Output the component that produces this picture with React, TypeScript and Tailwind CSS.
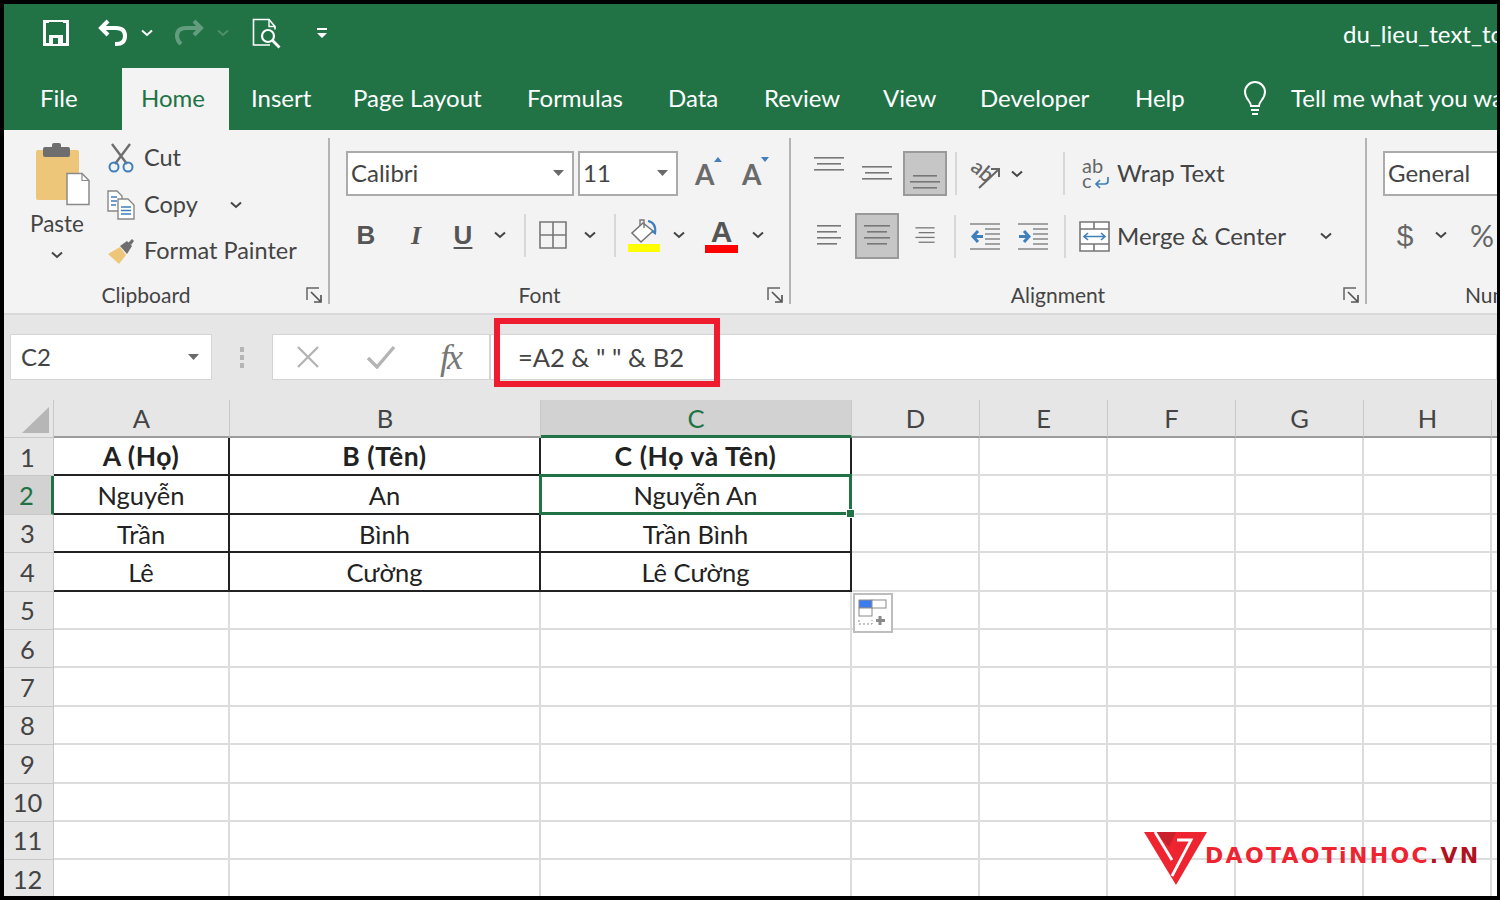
const tabs = [
  { label: 'File', cls: 'w-[101px] text-white' },
  { label: 'Home', cls: 'w-[110px] text-[#217346]' },
  { label: 'Insert', cls: 'w-[102px] text-white' },
  { label: 'Page Layout', cls: 'w-[174px] text-white' },
  { label: 'Formulas', cls: 'w-[141px] text-white' },
  { label: 'Data', cls: 'w-[96px] text-white' },
  { label: 'Review', cls: 'w-[119px] text-white' },
  { label: 'View', cls: 'w-[97px] text-white' },
  { label: 'Developer', cls: 'w-[155px] text-white' },
  { label: 'Help', cls: 'w-[107px] text-white' },
];

const columns = ['A', 'B', 'C', 'D', 'E', 'F', 'G', 'H', ''];

const tableData = [
  ['A (Họ)', 'B (Tên)', 'C (Họ và Tên)'],
  ['Nguyễn', 'An', 'Nguyễn An'],
  ['Trần', 'Bình', 'Trần Bình'],
  ['Lê', 'Cường', 'Lê Cường'],
];

const rowNumbers = [1, 2, 3, 4, 5, 6, 7, 8, 9, 10, 11, 12];

function Chevron({ className = 'text-[#444]' }: { className?: string }) {
  return (
    <svg width="12" height="8" viewBox="0 0 12 8" className={`shrink-0 ${className}`}>
      <path d="M1 1.5l5 4.5 5-4.5" fill="none" stroke="currentColor" strokeWidth="2" />
    </svg>
  );
}

function DropArrow() {
  return (
    <svg width="11" height="6" viewBox="0 0 11 6">
      <path d="M0 0h11L5.5 6z" fill="#6a6a6a" />
    </svg>
  );
}

function Launcher() {
  return (
    <svg width="17" height="17" viewBox="0 0 17 17" className="absolute right-[5px] bottom-0">
      <path d="M1 13V1h12" fill="none" stroke="#666" strokeWidth="1.5" />
      <path d="M5 5l9 9M15 8v7H8" fill="none" stroke="#555" strokeWidth="1.7" />
    </svg>
  );
}

function Lines({ widths, align }: { widths: number[]; align: 'left' | 'center' | 'right' }) {
  return (
    <svg width="30" height={widths.length * 6} viewBox={`0 0 30 ${widths.length * 6}`}>
      {widths.map((w, i) => (
        <rect
          key={i}
          x={align === 'left' ? 3 : align === 'right' ? 27 - w : 15 - w / 2}
          y={i * 6 + 1}
          width={w}
          height="1.6"
          fill="#777"
        />
      ))}
    </svg>
  );
}

function IndentIcon({ out }: { out?: boolean }) {
  return (
    <svg width="30" height="27" viewBox="0 0 30 27" className="shrink-0">
      <path d="M0 1h30M0 26h30" stroke="#888" strokeWidth="1.6" />
      <path d="M15 6h15M15 11h15M15 16h15M15 21h15" stroke="#888" strokeWidth="1.6" />
      {out ? (
        <path d="M13 13.500H4M8 8l-5 5.500 5 5.500" fill="none" stroke="#3f7fbb" strokeWidth="3" />
      ) : (
        <path d="M1 13.500h9M6 8l5 5.500-5 5.500" fill="none" stroke="#3f7fbb" strokeWidth="3" />
      )}
    </svg>
  );
}

function TitleBar() {
  return (
    <div className="h-[64px] flex items-center bg-[#217346] text-white pl-[39px] pb-[6px] overflow-hidden">
      <svg width="26" height="26" viewBox="0 0 26 26" className="mr-[29px] shrink-0">
        <path d="M1.500 1.500h23v23h-23z" fill="none" stroke="#fff" strokeWidth="3" />
        <path d="M6 2h14v8H6z" fill="#217346" />
        <path d="M6 15h14v9H6z" fill="#fff" />
        <path d="M10 18h5v6h-5z" fill="#217346" />
      </svg>
      <svg width="30" height="28" viewBox="0 0 30 28" className="mr-[13px] shrink-0">
        <path d="M10 2L3 9l7 7" fill="none" stroke="#fff" strokeWidth="4" />
        <path d="M4 9h14c6 0 9 3 9 8s-3 8-9 8h-1" fill="none" stroke="#fff" strokeWidth="4" />
      </svg>
      <Chevron className="text-white mr-[21px]" />
      <svg width="30" height="28" viewBox="0 0 30 28" className="mr-[13px] opacity-30 shrink-0">
        <path d="M20 2l7 7-7 7" fill="none" stroke="#fff" strokeWidth="4" />
        <path d="M26 9H12c-6 0-9 3-9 8s2 6 4 8" fill="none" stroke="#fff" strokeWidth="4" />
      </svg>
      <Chevron className="text-white opacity-20 mr-[23px]" />
      <svg width="31" height="31" viewBox="0 0 31 31" className="mr-[34px] shrink-0">
        <path d="M18 27H1.500V1.500H17l6 7v3" fill="none" stroke="#fff" strokeWidth="1.600" />
        <path d="M17 1.500v7h6" fill="none" stroke="#fff" strokeWidth="1.400" />
        <circle cx="16" cy="18" r="6" fill="none" stroke="#fff" strokeWidth="2.200" />
        <path d="M20.500 22.500l7 7" stroke="#fff" strokeWidth="2.800" />
      </svg>
      <svg width="10" height="12" viewBox="0 0 10 12" className="shrink-0">
        <path d="M0 1h10v2H0zM0 6h10l-5 5z" fill="#fff" />
      </svg>
      <span className="ml-auto mt-[2px] mr-[-60px] text-[24px] whitespace-nowrap w-[214px]">du_lieu_text_to_columns</span>
    </div>
  );
}

function TabBar() {
  return (
    <div className="h-[62px] flex bg-[#217346] text-[24px] overflow-hidden">
      <div className="w-[17px] shrink-0" />
      {tabs.map((t) => (
        <div
          key={t.label}
          className={`${t.cls} flex items-center pl-[19px] pb-[2px] shrink-0 ${t.label === 'Home' ? 'bg-[#f3f3f3] !w-[107px] mr-[3px]' : ''}`}
        >
          {t.label}
        </div>
      ))}
      <div className="flex items-center text-white shrink-0 whitespace-nowrap pb-[2px]">
        <svg width="26" height="36" viewBox="0 0 26 36" className="ml-[19px] mr-[23px]">
          <path
            d="M9 26c0-5-6-7-6-14a10 10 0 0 1 20 0c0 7-6 9-6 14z"
            fill="none"
            stroke="#fff"
            strokeWidth="2"
          />
          <path d="M9 30h8M10 34h6" stroke="#fff" strokeWidth="2" />
        </svg>
        Tell me what you want to do
      </div>
    </div>
  );
}

function Group({ width, label, launcher, children }: { width: string; label: string; launcher?: boolean; children: React.ReactNode }) {
  return (
    <div className={`${width} shrink-0 border-r-2 border-[#b4b4b4] flex flex-col relative`}>
      <div className="flex-1 min-h-0">{children}</div>
      <div className="h-[24px] pt-[5px] pr-[40px] leading-[20px] text-[21px] text-[#444] text-center">{label}</div>
      {launcher && <Launcher />}
    </div>
  );
}

function ClipboardGroup() {
  return (
    <div className="flex h-full pl-[18px]">
      <div className="w-[70px] flex flex-col items-center">
        <svg width="56" height="63" viewBox="0 0 56 63" className="mt-[5px] ml-[12px]">
          <rect x="1" y="7" width="43" height="50" rx="2" fill="#eec679" />
          <rect x="8" y="4" width="27" height="10" rx="2" fill="#6e6e6e" />
          <rect x="17" y="0" width="9" height="8" rx="2" fill="#6e6e6e" />
          <path d="M32 30.500h15l7 7v24H32z" fill="#fff" stroke="#8a8a8a" strokeWidth="1.500" />
          <path d="M47 30.500v7h7" fill="none" stroke="#8a8a8a" strokeWidth="1.200" />
        </svg>
        <div className="text-[22.5px] leading-[26px] text-[#444] mt-[5px]">Paste</div>
        <div className="mt-[14px]">
          <Chevron />
        </div>
      </div>
      <div className="flex flex-col ml-[15px] text-[23.5px] text-[#444]">
        <div className="h-[46px] flex items-center mt-[-3px]">
          <svg width="28" height="30" viewBox="0 0 28 30" className="mr-[9px]">
            <path d="M5 1l15 20M23 1L8 21" stroke="#6e6e6e" strokeWidth="2.400" />
            <circle cx="7" cy="24" r="4.500" fill="none" stroke="#3f7fbb" strokeWidth="2" />
            <circle cx="21" cy="24" r="4.500" fill="none" stroke="#3f7fbb" strokeWidth="2" />
          </svg>
          Cut
        </div>
        <div className="h-[47px] flex items-center">
          <svg width="28" height="30" viewBox="0 0 28 30" className="mr-[9px]">
            <path d="M1 1h9l5 5v15H1z" fill="#fff" stroke="#888" strokeWidth="1.400" />
            <path d="M11 9h10l6 6v14H11z" fill="#fff" stroke="#888" strokeWidth="1.400" />
            <path d="M4 7h6M4 11h6M4 15h5M14 17h10M14 20.500h10M14 24h10" stroke="#3f7fbb" strokeWidth="1.400" />
          </svg>
          Copy
          <Chevron className="text-[#444] ml-[32px]" />
        </div>
        <div className="h-[46px] flex items-center">
          <svg width="28" height="27" viewBox="0 0 28 27" className="mr-[9px]">
            <path d="M1 16l12-7 6 8-7 9z" fill="#eec679" />
            <path d="M13 8l7-5 5 5-5 8z" fill="#6e6e6e" />
            <path d="M21 5l4-4 2 2-3 4z" fill="#6e6e6e" />
          </svg>
          Format Painter
        </div>
      </div>
    </div>
  );
}

function FontGroup() {
  return (
    <div className="pl-[16px] pt-[13px] text-[#444]">
      <div className="flex items-center h-[45px]">
        <div className="w-[228px] h-[45px] bg-white border-2 border-[#ababab] flex items-center justify-between pl-[3px] pr-[8px] pb-[2px] text-[24px]">
          Calibri
          <DropArrow />
        </div>
        <div className="w-[100px] h-[45px] ml-[4px] bg-white border-2 border-[#ababab] flex items-center justify-between pl-[3px] pr-[8px] pb-[2px] text-[24px]">
          11
          <DropArrow />
        </div>
        <div className="ml-[17px] relative w-[25px] text-[28px] leading-none text-[#6a6a6a] font-bold">
          A
          <span className="absolute right-[-2px] top-[-3px] w-0 h-0 border-x-[4px] border-x-transparent border-b-[5px] border-b-[#3f7fbb]" />
        </div>
        <div className="ml-[22px] relative w-[25px] text-[28px] leading-none text-[#6a6a6a] font-bold">
          A
          <span className="absolute right-[-2px] top-[-3px] w-0 h-0 border-x-[4px] border-x-transparent border-t-[5px] border-t-[#3f7fbb]" />
        </div>
      </div>
      <div className="flex items-center h-[44px] mt-[17px]">
        <div className="w-[40px] shrink-0 text-center text-[26px] font-bold text-[#555] font-['Liberation_Sans',sans-serif]">B</div>
        <div className="w-[60px] shrink-0 text-center text-[26px] font-bold italic text-[#555] font-['Liberation_Serif',serif]">I</div>
        <div className="w-[34px] shrink-0 text-center text-[26px] font-bold text-[#555] underline underline-offset-[3px] font-['Liberation_Sans',sans-serif]">U</div>
        <div className="w-[40px] shrink-0 flex justify-center">
          <Chevron />
        </div>
        <div className="ml-[4px] w-[2px] h-[43px] bg-[#d8d8d8] shrink-0" />
        <svg width="28" height="28" viewBox="0 0 28 28" className="ml-[13px] shrink-0">
          <path d="M1 1h26v26H1zM14 1v26M1 14h26" fill="none" stroke="#777" strokeWidth="1.600" />
        </svg>
        <Chevron className="text-[#444] ml-[17px]" />
        <div className="ml-[18px] w-[2px] h-[43px] bg-[#d8d8d8] shrink-0" />
        <div className="ml-[12px] w-[32px] flex flex-col items-center shrink-0">
          <svg width="28" height="26" viewBox="0 0 28 26">
            <path d="M13 5L2 15l9 9 12-11z" fill="#fff" stroke="#777" strokeWidth="1.600" />
            <path d="M10 8V2h4v8" fill="none" stroke="#777" strokeWidth="1.400" />
            <path d="M18 3c5 1 8 5 7 12l-3-2" fill="none" stroke="#3f7fbb" strokeWidth="2.200" />
          </svg>
          <div className="w-[32px] h-[8px] bg-[#ffff00]" />
        </div>
        <Chevron className="text-[#444] ml-[13px]" />
        <div className="ml-[20px] w-[33px] flex flex-col items-center shrink-0">
          <span className="text-[30px] leading-[27px] font-bold text-[#555] font-['Liberation_Sans',sans-serif]">A</span>
          <div className="w-[33px] h-[8px] bg-[#ff0000]" />
        </div>
        <Chevron className="text-[#444] ml-[14px]" />
      </div>
    </div>
  );
}

function AlignmentGroup() {
  return (
    <div className="pl-[13px] pt-[13px] text-[#444] text-[24px]">
      <div className="flex items-center h-[45px]">
        <div className="w-[50px] flex justify-center mb-[18px] shrink-0">
          <Lines widths={[30, 24, 30]} align="center" />
        </div>
        <div className="w-[46px] flex justify-center shrink-0">
          <Lines widths={[30, 24, 30]} align="center" />
        </div>
        <div className="ml-[3px] w-[44px] h-[45px] bg-[#c6c6c6] border-2 border-[#9a9a9a] flex items-end justify-center pb-[2px] shrink-0">
          <Lines widths={[24, 30, 24]} align="center" />
        </div>
        <div className="ml-[8px] w-[2px] h-[43px] bg-[#d8d8d8] shrink-0" />
        <svg width="32" height="32" viewBox="0 0 32 32" className="ml-[12px] shrink-0">
          <text x="1" y="18" fontSize="21" fontWeight="600" fill="#666" transform="rotate(40 10 14)" fontFamily="Lato">ab</text>
          <path d="M10 30L29 12M22 11h8v8" fill="none" stroke="#666" strokeWidth="2" />
        </svg>
        <Chevron className="text-[#444] ml-[10px]" />
        <div className="ml-[40px] w-[2px] h-[43px] bg-[#d8d8d8] shrink-0" />
        <div className="ml-[17px] w-[27px] h-[34px] relative leading-[15px] text-[20px] text-[#666] shrink-0 pt-[1px]">
          <div>ab</div>
          <div>c</div>
          <svg width="16" height="12" viewBox="0 0 16 12" className="absolute right-[-1px] bottom-[2px]">
            <path d="M14 0v4c0 2-1 3-3 3H3M6 3L2 7l4 4" fill="none" stroke="#3f7fbb" strokeWidth="1.700" />
          </svg>
        </div>
        <span className="ml-[8px] pb-[2px] whitespace-nowrap">Wrap Text</span>
      </div>
      <div className="flex items-center h-[46px] mt-[17px]">
        <div className="w-[50px] flex justify-center shrink-0">
          <Lines widths={[24, 20, 24, 20]} align="left" />
        </div>
        <div className="ml-[1px] w-[44px] h-[46px] bg-[#c6c6c6] border-2 border-[#9a9a9a] flex items-center justify-center shrink-0">
          <Lines widths={[26, 20, 26, 20]} align="center" />
        </div>
        <div className="ml-[14px] w-[24px] flex justify-center shrink-0">
          <Lines widths={[24, 20, 24, 20]} align="right" />
        </div>
        <div className="ml-[17px] w-[2px] h-[43px] bg-[#d8d8d8] shrink-0" />
        <div className="ml-[14px]">
          <IndentIcon out />
        </div>
        <div className="ml-[18px]">
          <IndentIcon />
        </div>
        <div className="ml-[16px] w-[2px] h-[43px] bg-[#d8d8d8] shrink-0" />
        <svg width="31" height="31" viewBox="0 0 31 31" className="ml-[13px] shrink-0">
          <path d="M1 1h29v29H1zM1 8h29M1 23h29M15 1v7M15 23v7" fill="#fff" stroke="#777" strokeWidth="1.600" />
          <path d="M5 15.500h21M9 12l-4 3.500 4 3.500M22 12l4 3.500-4 3.500" fill="none" stroke="#3f7fbb" strokeWidth="1.600" />
        </svg>
        <span className="ml-[7px] w-[203px] whitespace-nowrap">Merge &amp; Center</span>
        <Chevron />
      </div>
    </div>
  );
}

function NumberGroup() {
  return (
    <div className="pl-[16px] pt-[13px] text-[#444] flex flex-col h-full w-[130px]">
      <div className="w-[200px] h-[45px] bg-white border-2 border-[#ababab] flex items-center pl-[3px] pb-[2px] text-[24px] shrink-0">General</div>
      <div className="flex items-center h-[44px] mt-[17px] text-[#666] text-[30px] whitespace-nowrap shrink-0">
        <span className="w-[44px] text-center font-['Liberation_Sans',sans-serif]">$</span>
        <Chevron className="text-[#444] ml-[8px]" />
        <span className="ml-[23px] text-[30px]">%</span>
      </div>
      <div className="mt-auto h-[24px] pt-[5px] leading-[20px] text-[21px] pl-[82px] whitespace-nowrap">Number</div>
    </div>
  );
}

function Ribbon() {
  return (
    <div className="h-[183px] bg-[#f3f3f3] flex pt-[8px] pb-[9px] overflow-hidden">
      <Group width="w-[326px]" label="Clipboard" launcher>
        <ClipboardGroup />
      </Group>
      <Group width="w-[461px]" label="Font" launcher>
        <FontGroup />
      </Group>
      <Group width="w-[576px]" label="Alignment" launcher>
        <AlignmentGroup />
      </Group>
      <NumberGroup />
    </div>
  );
}

function FormulaBar() {
  return (
    <div className="h-[87px] bg-[#e6e6e6] border-t-2 border-[#d9d9d9] pt-[19px] flex text-[#444]">
      <div className="ml-[6px] w-[202px] h-[46px] bg-white border border-[#d4d4d4] flex items-center justify-between pl-[10px] pr-[12px] text-[24px]">
        C2
        <DropArrow />
      </div>
      <div className="w-[60px] h-[46px] flex flex-col items-center justify-center gap-[3px]">
        <span className="w-[4px] h-[5px] bg-[#b5b5b5]" />
        <span className="w-[4px] h-[5px] bg-[#b5b5b5]" />
        <span className="w-[4px] h-[5px] bg-[#b5b5b5]" />
      </div>
      <div className="w-[218px] h-[46px] bg-white border border-[#d4d4d4] flex items-center">
        <svg width="24" height="24" viewBox="0 0 24 24" className="ml-[23px] shrink-0">
          <path d="M2 2l20 20M22 2L2 22" stroke="#b4b4b4" strokeWidth="2.400" />
        </svg>
        <svg width="30" height="24" viewBox="0 0 30 24" className="ml-[46px] shrink-0">
          <path d="M2 13l9 9L28 2" fill="none" stroke="#b4b4b4" strokeWidth="3.400" />
        </svg>
        <span className="ml-[44px] text-[36px] leading-none italic font-['Liberation_Serif',serif] text-[#777] tracking-[-3px]">fx</span>
      </div>
      <div className="flex-1 h-[46px] bg-white border border-[#d4d4d4] flex items-center pl-[27px] text-[25.5px] whitespace-pre">
        {'=A2 & " " & B2'}
      </div>
    </div>
  );
}

function Sheet() {
  return (
    <div className="grid grid-cols-[50px_176px_311px_311px_128px_128px_128px_128px_128px_128px] grid-rows-[38px_repeat(12,38.4px)] h-[496px] overflow-hidden bg-white text-[25.5px] text-[#222]">
      <div className="bg-[#e6e6e6] border-r border-b border-[#c8c8c8] relative">
        <svg width="28" height="27" viewBox="0 0 28 27" className="absolute left-[18px] top-[7px]">
          <path d="M27 0v26H0z" fill="#b6b6b6" />
        </svg>
      </div>
      {columns.map((c) => (
        <div
          key={c}
          className={`flex items-center justify-center border-r border-[#c8c8c8] ${
            c === 'C' ? 'bg-[#d2d2d2] text-[#217346] border-b-[3px] border-b-[#217346] pt-[1px]' : 'bg-[#e6e6e6] text-[#444] border-b-2 border-b-[#9c9c9c]'
          }`}
        >
          {c}
        </div>
      ))}
      {rowNumbers.map((n, r) => (
        <div key={n} className="contents">
          <div
            className={`flex items-center justify-center border-b border-[#c8c8c8] pr-[2px] ${
              n === 2 ? 'bg-[#d2d2d2] text-[#217346] border-r-[3px] border-r-[#217346]' : 'bg-[#e6e6e6] text-[#444] border-r border-r-[#c8c8c8]'
            }`}
          >
            {n}
          </div>
          {columns.map((c, i) => {
            const inTable = r < 4 && i < 3;
            const text = inTable ? tableData[r][i] : '';
            return (
              <div
                key={c + n}
                className={`relative flex items-center justify-center whitespace-nowrap pt-[2px] ${
                  inTable ? 'border-r-2 border-b-2 border-[#222]' : 'border-r-2 border-b-2 border-[#dcdcdc]'
                } ${inTable && r === 0 ? 'font-bold text-[26.5px] tracking-[0.6px]' : ''}`}
              >
                {text}
                {r === 1 && i === 2 && (
                  <div className="absolute left-[-2px] top-[-2px] right-[-2px] bottom-[-2px] border-[3px] border-[#217346] z-10">
                    <span className="absolute right-[-6px] bottom-[-6px] w-[9px] h-[9px] bg-[#217346] border border-white" />
                  </div>
                )}
                {r === 4 && i === 3 && (
                  <div className="absolute left-[1px] top-[1px] w-[40px] h-[40px] bg-white border-2 border-[#bdbdbd] z-10 flex items-center justify-center">
                    <svg width="30" height="30" viewBox="0 0 30 30">
                      <rect x="1" y="2" width="13" height="8" fill="#3b7cf0" stroke="#8a8a8a" />
                      <rect x="14" y="2" width="14" height="8" fill="#fff" stroke="#8a8a8a" />
                      <rect x="1" y="10" width="13" height="8" fill="#fff" stroke="#8a8a8a" />
                      <path d="M1 22v4h13v-4" fill="none" stroke="#8a8a8a" strokeDasharray="2 2" />
                      <path d="M22 18v9M18 22.500h9" stroke="#8a8a8a" strokeWidth="3" />
                    </svg>
                  </div>
                )}
              </div>
            );
          })}
        </div>
      ))}
    </div>
  );
}

function Watermark() {
  return (
    <div className="absolute left-[1144px] top-[830px] flex items-start z-20">
      <svg width="64" height="56" viewBox="0 0 64 56" className="shrink-0">
        <path d="M0 2h63L32 55z" fill="#ee2430" />
        <path d="M11 2h21l-7 15z" fill="#c9202b" />
        <path d="M11 2l17 28" stroke="#fff" strokeWidth="2.800" fill="none" />
        <path d="M33 10h14L28 46" stroke="#fff" strokeWidth="2.800" fill="none" />
      </svg>
      <span className="ml-[-3px] mt-[12px] text-[22px] leading-[28px] font-bold tracking-[2.3px] text-[#ee2430] font-['DejaVu_Sans',sans-serif] whitespace-nowrap">
        DAOTAOTiNHOC<span className="text-[#b0131f]">.VN</span>
      </span>
    </div>
  );
}

export default function App() {
  return (
    <div className="w-[1500px] h-[900px] bg-black pt-[4px] pl-[4px] pr-[3px] pb-[4px] relative overflow-hidden font-['Lato','Noto_Sans',sans-serif]">
      <div className="w-[1493px] h-[892px] overflow-hidden">
        <TitleBar />
        <TabBar />
        <Ribbon />
        <FormulaBar />
        <Sheet />
      </div>
      <div className="absolute left-[494px] top-[318px] w-[226px] h-[69px] border-[6px] border-[#ee1c2e]" />
      <Watermark />
    </div>
  );
}
